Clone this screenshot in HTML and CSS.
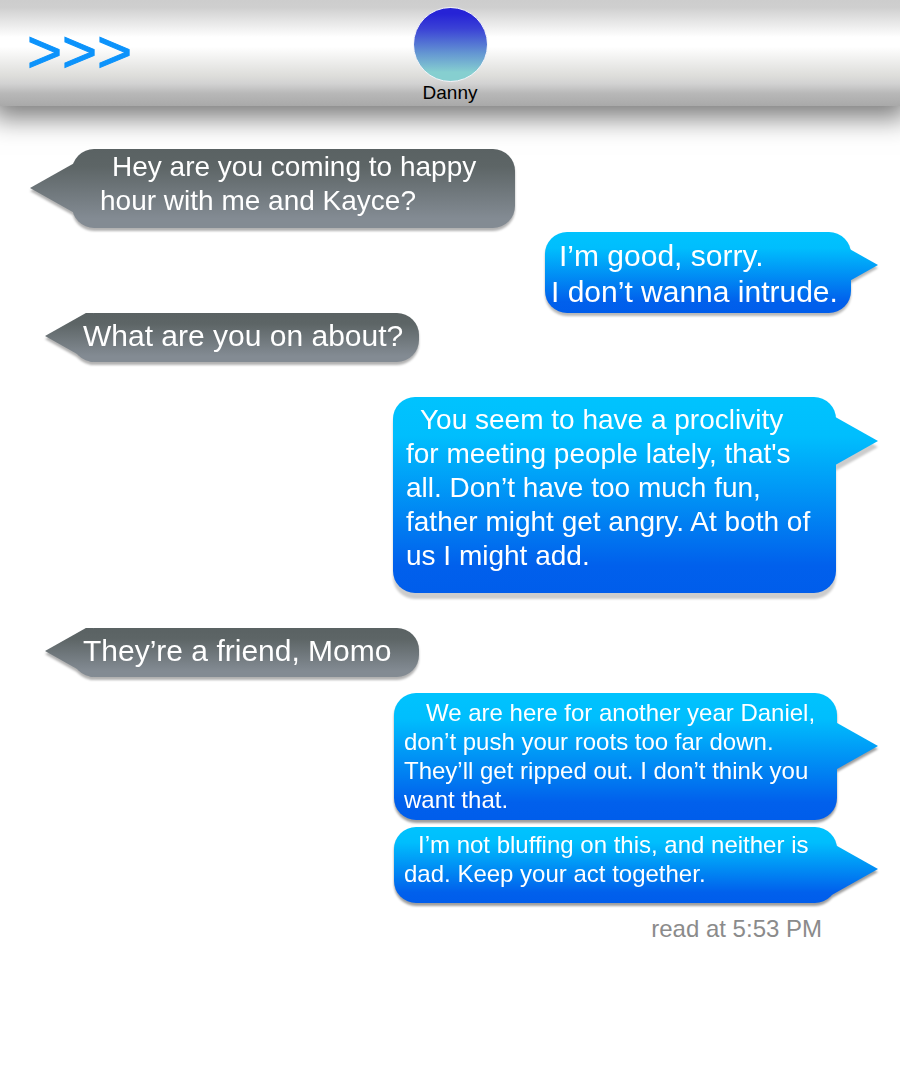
FILE: index.html
```html
<!DOCTYPE html>
<html lang="en">
<head>
<meta charset="utf-8">
<meta name="viewport" content="width=device-width, initial-scale=1">
<title>Danny</title>
<link rel="stylesheet" href="styles.css">
</head>
<body>
<header class="topbar">
  <button class="back" type="button">&gt;&gt;&gt;</button>
  <div class="contact">
    <div class="avatar"></div>
    <h1 class="name">Danny</h1>
  </div>
</header>
<main class="thread">
  <p class="bubble received opening">Hey are you coming to happy hour with me and Kayce?</p>
  <p class="bubble sent brief">I’m good, sorry.<br>I don’t wanna intrude.</p>
  <p class="bubble received single">What are you on about?</p>
  <p class="bubble sent long">You seem to have a proclivity for meeting people lately, that's all. Don’t have too much fun, father might get angry. At both of us I might add.</p>
  <p class="bubble received single later">They’re a friend, Momo</p>
  <p class="bubble sent small warning">We are here for another year Daniel, don’t push your roots too far down. They’ll get ripped out. I don’t think you want that.</p>
  <p class="bubble sent small closing">I’m not bluffing on this, and neither is dad. Keep your act together.</p>
  <p class="receipt">read at 5:53 PM</p>
</main>
</body>
</html>
```

FILE: styles.css
```css
* {
  box-sizing: border-box;
}

body {
  margin: 0;
  background: #fff;
  font-family: "Liberation Sans", Arial, sans-serif;
}

.topbar {
  display: grid;
  grid-template-columns: 1fr auto 1fr;
  align-items: center;
  padding: 7px 0 3px;
  background: linear-gradient(#cdcdcd 0%, #cfcfcf 7%, #fff 35%, #fff 44%, #dededb 71%, #d2d2d2 79%, #b8b8b8 88%, #a9a9a9 100%);
  box-shadow: 0 4px 25px 8px rgba(0, 0, 0, 0.52);
}

.back {
  justify-self: start;
  margin: 0;
  padding: 0 0 6px 27px;
  border: 0;
  background: none;
  color: #0c93fb;
  font: 60px/60px "Liberation Sans", Arial, sans-serif;
  -webkit-text-stroke: 1px #0c93fb;
  cursor: pointer;
}

.contact {
  display: flex;
  flex-direction: column;
  align-items: center;
}

.avatar {
  width: 75px;
  height: 75px;
  border: 1px solid #f4f4fa;
  border-radius: 50%;
  background: linear-gradient(#2623d6 8%, #3a41d6 28%, #6496d2 62%, #86cfd0 88%);
}

.name {
  margin: 1px 0 0;
  color: #000;
  font-size: 19px;
  font-weight: 400;
  line-height: 20px;
}

.thread {
  display: flex;
  flex-direction: column;
  padding: 43px 22px 40px 30px;
}

.bubble {
  --tail-out: 42px;
  --tip: 39px;
  position: relative;
  isolation: isolate;
  max-width: 443px;
  margin: 0;
  border-radius: 22px;
  background: var(--fill);
  color: #fff;
  font-size: 28px;
  line-height: 34px;
}

/* The tail spans the bubble's height so both share one gradient. */
.bubble::before {
  content: "";
  position: absolute;
  z-index: -1;
  top: 0;
  bottom: 0;
  width: 48px;
  background: var(--fill);
}

.received {
  --fill: linear-gradient(#5a6263 0%, #5d6566 22%, #838b93 88%);
  align-self: flex-start;
  margin-left: var(--tail-out);
  filter: drop-shadow(0 3px 1px rgba(0, 0, 0, 0.3));
}

.received::before {
  left: calc(0px - var(--tail-out));
  clip-path: polygon(0 var(--tip), 100% calc(var(--tip) - 27px), 100% calc(var(--tip) + 27px));
}

.sent {
  --fill: linear-gradient(#00c3fe 0%, #00befd 20%, #0160ec 86%, #005deb 100%);
  align-self: flex-end;
  margin-right: var(--tail-out);
  filter: drop-shadow(0 3px 1px rgba(0, 0, 0, 0.28));
}

.sent::before {
  right: calc(0px - var(--tail-out));
  clip-path: polygon(100% var(--tip), 0 calc(var(--tip) - 27px), 0 calc(var(--tip) + 27px));
}

.opening {
  padding: 1px 14px 10px 28px;
  text-indent: 12px;
}

.brief {
  --tail-out: 27px;
  --tip: 33px;
  min-width: 306px;
  margin-top: 4px;
  padding: 6px 9px 3px 6px;
  font-size: 30px;
  line-height: 36px;
  text-indent: 8px;
}

.single {
  --tail-out: 27px;
  --tip: 23px;
  min-width: 347px;
  margin-left: 42px;
  padding: 5px 14px 8px 11px;
  font-size: 30px;
  line-height: 36px;
}

.long {
  --tip: 44px;
  margin-top: 35px;
  padding: 6px 14px 20px 13px;
  text-indent: 14px;
  filter: drop-shadow(0 6px 1px rgba(0, 0, 0, 0.2));
}

.later {
  margin-top: 35px;
}

.small {
  --tail-out: 41px;
  font-size: 24px;
  line-height: 29px;
  filter: drop-shadow(0 3px 1px rgba(0, 0, 0, 0.38));
}

.warning {
  --tip: 53px;
  margin-top: 16px;
  padding: 5px 14px 6px 10px;
  text-indent: 22px;
}

.closing {
  --tip: 42px;
  margin-top: 7px;
  padding: 3px 14px 15px 10px;
  text-indent: 14px;
}

.receipt {
  align-self: flex-end;
  margin: 11px 56px 0 0;
  color: #8b8b8b;
  font-size: 24px;
  line-height: 29px;
}
```
